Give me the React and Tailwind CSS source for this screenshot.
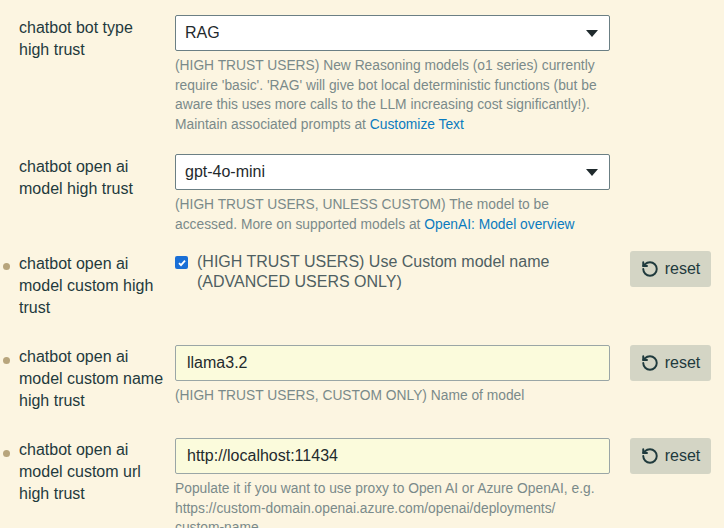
import React from "react";

const Reset = () => (
  <button className="flex items-center gap-[6px] h-[36px] w-[81px] justify-center bg-[#d4d5c5] rounded-[3px] text-[16px] text-[#1f3a3d]">
    <svg width="18" height="18" viewBox="0 0 24 24" fill="none" stroke="#1f3a3d" strokeWidth="2.6" strokeLinecap="round" strokeLinejoin="round">
      <path d="M3 12a9 9 0 1 0 9-9 9.75 9.75 0 0 0-6.74 2.74L3 8" />
      <path d="M3 3v5h5" />
    </svg>
    reset
  </button>
);

const Caret = () => (
  <svg width="12" height="7" viewBox="0 0 12 7"><path d="M0 0h12L6 7z" fill="#1f2a2d" /></svg>
);

const Row = ({ bullet, label, children, reset, mt }) => (
  <div className={`flex ${mt}`}>
    <div className="w-[19px] flex justify-start pl-[3px]">
      {bullet && <div className="w-[7px] h-[7px] rounded-full bg-[#b8a57c] mt-[12px]" />}
    </div>
    <div className="w-[156px] text-[16px] leading-[22px] text-[#1f3a3d] pr-2">{label}</div>
    <div className="w-[435px]">{children}</div>
    <div className="ml-[20px]">{reset && <Reset />}</div>
  </div>
);

const Help = ({ children }) => (
  <div className="text-[13.8px] leading-[19.5px] text-[#7a8a8a] mt-[5px] pr-1">{children}</div>
);

const Select = ({ v }) => (
  <div className="h-[36px] border border-[#6b7f84] bg-white rounded-[2px] flex items-center justify-between px-[9px] pr-[11px] text-[16px] text-[#1f2a2d]">
    <span>{v}</span><Caret />
  </div>
);

const Input = ({ v }) => (
  <div className="h-[36px] border border-[#9aa6a6] bg-[#fbfbdc] rounded-[2px] flex items-center px-[11px] text-[16px] text-[#1f2a2d]">{v}</div>
);

const A = ({ children }) => <span className="text-[#0a7bbf]">{children}</span>;

export default function App() {
  return (
    <div className="w-[724px] h-[528px] overflow-hidden bg-[#fcf5e1] pt-[15px]" style={{ fontFamily: '"Liberation Sans", Arial, sans-serif' }}>
      <Row label={<div className="mt-[2px]">chatbot bot type high trust</div>}>
        <Select v="RAG" />
        <Help>(HIGH TRUST USERS) New Reasoning models (o1 series) currently require 'basic'. 'RAG' will give bot local deterministic functions (but be aware this uses more calls to the LLM increasing cost significantly!). Maintain associated prompts at <A>Customize Text</A></Help>
      </Row>
      <Row mt="mt-[20px]" label={<div className="mt-[2px]">chatbot open ai model high trust</div>}>
        <Select v="gpt-4o-mini" />
        <Help>(HIGH TRUST USERS, UNLESS CUSTOM) The model to be accessed. More on supported models at <A>OpenAI: Model overview</A></Help>
      </Row>
      <Row mt="mt-[17px]" bullet reset label={<div className="mt-[2px]">chatbot open ai model custom high trust</div>}>
        <div className="flex items-start gap-[9px] mt-[1px]">
          <div className="w-[13px] h-[13px] mt-[4px] rounded-[2px] bg-[#1a6fd6] flex items-center justify-center shrink-0">
            <svg width="10" height="10" viewBox="0 0 10 10"><path d="M2 5.2l2 2 4-4.6" stroke="white" strokeWidth="1.8" fill="none" /></svg>
          </div>
          <div className="text-[16px] leading-[20px] text-[#4f5f62]">(HIGH TRUST USERS) Use Custom model name (ADVANCED USERS ONLY)</div>
        </div>
      </Row>
      <Row mt="mt-[26px]" bullet reset label={<div className="mt-[1px]">chatbot open ai model custom name high trust</div>}>
        <Input v="llama3.2" />
        <Help>(HIGH TRUST USERS, CUSTOM ONLY) Name of model</Help>
      </Row>
      <Row mt="mt-[26px]" bullet reset label={<div className="mt-[1px]">chatbot open ai model custom url high trust</div>}>
        <Input v="http://localhost:11434" />
        <Help>Populate it if you want to use proxy to Open AI or Azure OpenAI, e.g. https://custom-domain.openai.azure.com/openai/deployments/ custom-name</Help>
      </Row>
    </div>
  );
}
